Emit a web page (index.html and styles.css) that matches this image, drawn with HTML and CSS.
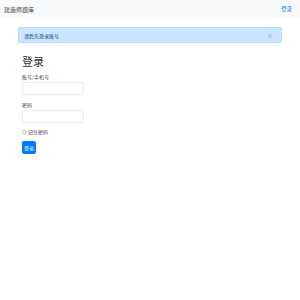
FILE: index.html
```html
<!DOCTYPE html>
<html lang="zh">
<head>
  <meta charset="UTF-8" />
  <meta name="viewport" content="width=device-width, initial-scale=1.0"/>
  <title>建造师题库</title>
  <link rel="stylesheet" href="styles.css">
</head>
<body>
  <nav class="barra">
    <span class="marca">建造师题库</span>
    <a class="entrar" href="#">登录</a>
  </nav>

  <div class="contenido">
    <div class="aviso">
      <span>请您先登录账号</span>
      <span class="cerrar">×</span>
    </div>

    <h1>登录</h1>

    <div class="datos">
      <label for="cuenta">账号/手机号</label>
      <input type="text" id="cuenta">

      <label for="clave">密码</label>
      <input type="password" id="clave">

      <div class="recordar">
        <input type="checkbox" id="recordar">
        <label for="recordar">记住密码</label>
      </div>

      <button class="ok">登录</button>
    </div>
  </div>
</body>
</html>
```
FILE: styles.css
```css
body {
  margin: 0;
  font-family: "Noto Sans CJK SC", "Noto Sans", sans-serif;
  background-color: #fff;
  color: #212529;
}

.barra {
  height: 18px;
  background-color: #f8f9fa;
  display: flex;
  align-items: center;
  justify-content: space-between;
  padding: 0 8px 0 4px;
}

.marca {
  font-size: 6px;
  color: #444;
}

.entrar {
  font-size: 5.5px;
  color: #007bff;
  text-decoration: none;
}

.contenido {
  padding: 9px 18px 0;
}

.aviso {
  height: 16px;
  background-color: #cce5ff;
  border: 1px solid #b8daff;
  border-radius: 2px;
  box-sizing: border-box;
  display: flex;
  align-items: center;
  justify-content: space-between;
  padding: 0 6px 0 5px;
  font-size: 5px;
  color: #004085;
}

.cerrar {
  font-size: 6px;
  color: #6a7f96;
  margin-right: 2px;
}

h1 {
  font-size: 11px;
  font-weight: 400;
  color: #333;
  margin: 12px 0 5px 4px;
  line-height: 13px;
}

.datos {
  margin-left: 4px;
  font-size: 5px;
  color: #444;
}

.datos label {
  display: block;
  line-height: 7px;
}

.datos > label {
  margin: 0 0 2px;
}

.datos input[type="text"],
.datos input[type="password"] {
  display: block;
  width: 62px;
  height: 13px;
  box-sizing: border-box;
  border: 1px solid #ebedef;
  border-radius: 2px;
  padding: 0;
  margin-bottom: 6px;
}

.datos input[type="password"] {
  margin-top: 1px;
  margin-bottom: 5px;
}

.recordar {
  display: flex;
  align-items: center;
  gap: 2px;
  margin: 0 0 6px;
}

.recordar input {
  appearance: none;
  width: 4px;
  height: 4px;
  margin: 0;
  border: 1px solid #c4c4c4;
  border-radius: 1px;
}

.ok {
  display: block;
  width: 14px;
  height: 13px;
  padding: 0;
  border: none;
  border-radius: 2px;
  background-color: #007bff;
  color: white;
  font-size: 5px;
  font-family: inherit;
}
```
